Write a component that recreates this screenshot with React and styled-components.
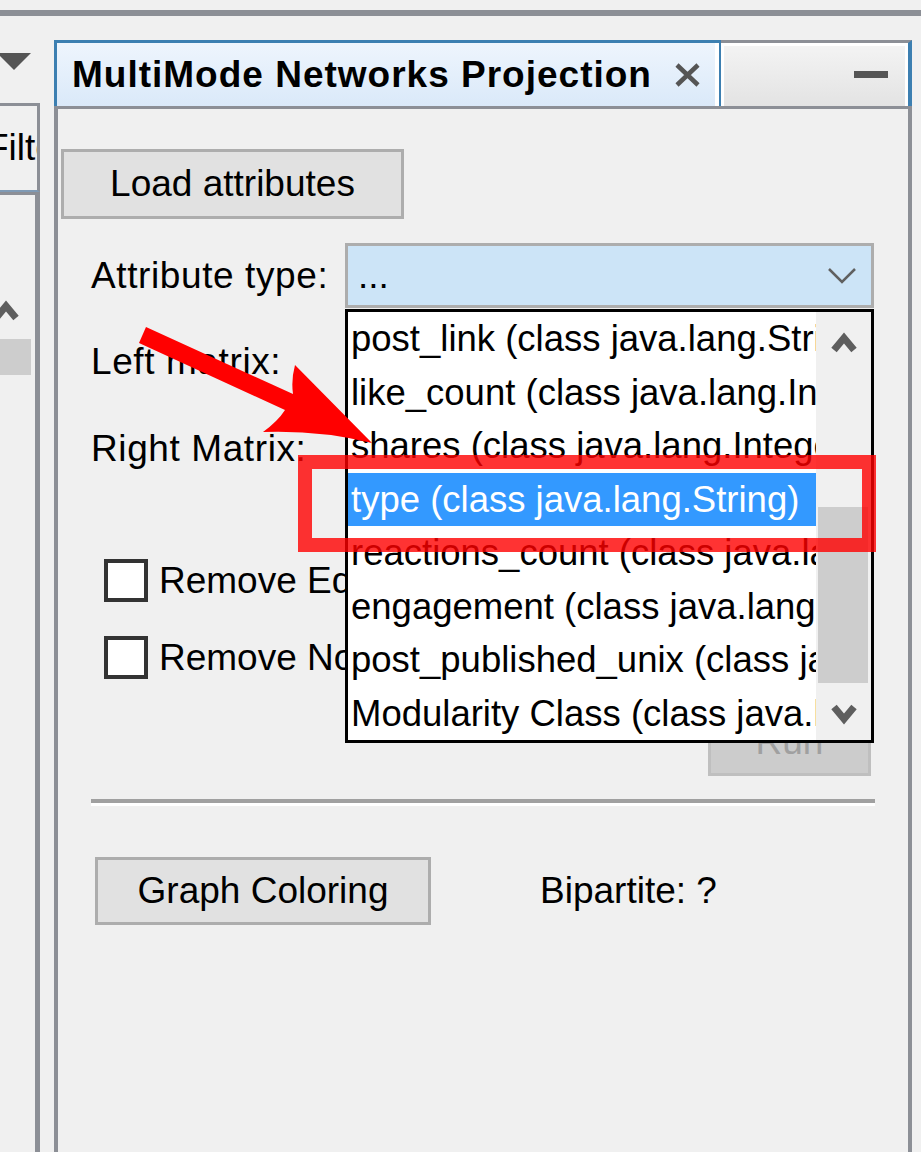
import React from "react"
import styled, { createGlobalStyle } from "styled-components"

const LINE = "#8c8f96"
const BLUE = "#3c7fb1"

const GlobalStyle = createGlobalStyle`
*{
  margin:0;
  padding:0;
  box-sizing:border-box;
}
html, body{
  background:#f0f0f0;
}
body{
  font-family:"Liberation Sans", Arial, sans-serif;
  overflow:hidden;
}
`

const Page = styled.div`
position:relative;
width:921px;
height:1152px;
overflow:hidden;
display:flex;
flex-direction:column;
font-size:37px;
color:#000;
`

const TopRule = styled.div`
margin-top:10px;
height:6px;
flex-shrink:0;
background:${LINE};
`

const Workspace = styled.div`
display:flex;
flex:1;
min-height:0;
`

/* left dock, mostly cut off */
const LeftDock = styled.div`
width:40px;
display:flex;
flex-direction:column;
overflow:hidden;
`

const DockHeader = styled.div`
height:87px;
padding-top:37px;
`

const DockArrow = styled.div`
width:0;
height:0;
margin-left:-3px;
border-left:17px solid transparent;
border-right:17px solid transparent;
border-top:17px solid #555;
`

const FilterTab = styled.div`
height:89px;
display:flex;
align-items:center;
overflow:hidden;
white-space:nowrap;
border-top:3px solid ${LINE};
border-right:3px solid ${LINE};
border-bottom:2px solid #7f9ab5;
`

const FilterLabel = styled.span`
margin-left:-14px;
`

const LowerPane = styled.div`
flex:1;
display:flex;
flex-direction:column;
overflow:hidden;
padding-top:105px;
border-top:3px solid ${LINE};
border-right:5px solid ${LINE};
`

const PaneChevron = styled.svg`
margin-left:-7px;
flex-shrink:0;
`

const PaneThumb = styled.div`
margin-top:17px;
width:31px;
height:36px;
background:#cdcdcd;
`

/* main dock */
const MainDock = styled.div`
width:858px;
margin-left:14px;
margin-top:24px;
display:flex;
flex-direction:column;
`

const TabStrip = styled.div`
display:flex;
height:69px;
flex-shrink:0;
border-bottom:3px solid ${LINE};
`

const ActiveTab = styled.div`
width:667px;
display:flex;
align-items:center;
justify-content:space-between;
padding:0 18px 0 15px;
border-top:3px solid ${BLUE};
border-left:3px solid ${BLUE};
border-right:2px solid ${BLUE};
box-shadow:inset -4px 0 0 #fff;
background:linear-gradient(#eef5fd, #dae9f9);
`

const TabTitle = styled.span`
font-weight:bold;
letter-spacing:1px;
white-space:nowrap;
`

const TabCorner = styled.div`
flex:1;
display:flex;
align-items:center;
justify-content:flex-end;
padding-right:20px;
border-top:3px solid ${LINE};
border-right:4px solid ${BLUE};
box-shadow:inset 3px 3px 0 #fff, inset -3px 0 0 #fff;
background:linear-gradient(#f4f4f4, #e3e3e3);
`

const MinimizeDash = styled.div`
width:34px;
height:7px;
background:#555;
`

const Body = styled.div`
flex:1;
display:flex;
flex-direction:column;
align-items:flex-start;
border-left:4px solid ${LINE};
border-right:4px solid ${LINE};
`

const Button = styled.button`
font:inherit;
font-size:37px;
color:${p => (p.disabled ? "#a0a0a0" : "#000")};
background:${p => (p.disabled ? "#cccccc" : "#e1e1e1")};
border:3px solid ${p => (p.disabled ? "#bfbfbf" : "#adadad")};
display:flex;
align-items:center;
justify-content:center;
white-space:nowrap;
`

const LoadButton = styled(Button)`
margin:40px 0 0 3px;
width:343px;
height:70px;
`

const Form = styled.div`
display:grid;
grid-template-columns:254px 529px;
grid-auto-rows:65px;
row-gap:21.5px;
align-items:center;
margin:24px 0 0 33px;
`

const Label = styled.span`
white-space:nowrap;
letter-spacing:${p => (p.$wide ? "0.6px" : "0")};
`

const ComboWrap = styled.div`
position:relative;
height:65px;
`

const Combo = styled.div`
height:100%;
display:flex;
align-items:center;
justify-content:space-between;
padding:0 15px 0 10px;
border:3px solid #adadad;
background:${p => (p.$focused ? "#cce4f7" : "#e1e1e1")};
`

const Popup = styled.div`
position:absolute;
top:calc(100% + 1px);
left:0;
width:529px;
height:434px;
display:flex;
background:#fff;
border:3px solid #000;
z-index:5;
`

const PopupList = styled.ul`
list-style:none;
width:468px;
display:flex;
flex-direction:column;
overflow:hidden;
`

const PopupItem = styled.li`
height:53.5px;
line-height:53.5px;
padding-left:3px;
white-space:nowrap;
overflow:hidden;
font-size:36.5px;
color:${p => (p.$selected ? "#fff" : "#000")};
background:${p => (p.$selected ? "#3399ff" : "transparent")};
`

const ScrollBar = styled.div`
width:55px;
display:flex;
flex-direction:column;
background:#f0f0f0;
`

const ScrollCell = styled.div`
height:${p => p.$h}px;
display:flex;
align-items:center;
justify-content:center;
`

const ScrollTrack = styled.div`
flex:1;
padding-top:133px;
padding-left:2px;
`

const ScrollThumb = styled.div`
width:50px;
height:176px;
background:#cdcdcd;
`

const CheckList = styled.div`
display:flex;
flex-direction:column;
gap:27px;
margin:74.5px 0 0 46px;
`

const CheckRow = styled.label`
height:50px;
display:flex;
align-items:center;
gap:11px;
white-space:nowrap;
`

const CheckBox = styled.span`
width:44px;
height:43px;
border:4px solid #333;
background:#fff;
`

const RunButton = styled(Button)`
align-self:flex-end;
margin:25.5px 37px 0 0;
width:163px;
height:68px;
`

const Separator = styled.div`
align-self:stretch;
margin:23px 33px 0 33px;
height:7px;
border-top:4px solid #a0a0a0;
background:#fff;
`

const BottomRow = styled.div`
display:flex;
align-items:center;
gap:109px;
margin:51px 0 0 37px;
`

const GraphButton = styled(Button)`
width:336px;
height:68px;
`

/* annotations drawn on top of the screenshot */
const Highlight = styled.div`
position:absolute;
left:298px;
top:455px;
width:578px;
height:97px;
border:14px solid rgba(255, 0, 0, 0.8);
z-index:10;
pointer-events:none;
`

const Arrow = styled.svg`
position:absolute;
left:130px;
top:320px;
z-index:11;
pointer-events:none;
`

const Caret = ({ down }) => (
  <svg width="26" height="22" viewBox="0 0 26 22">
    <polyline
      points={down ? "3,4 13,16 23,4" : "3,18 13,6 23,18"}
      fill="none"
      stroke="#5e5e5e"
      strokeWidth="7"
    />
  </svg>
)

const items = [
  "post_link (class java.lang.String)",
  "like_count (class java.lang.Integer)",
  "shares (class java.lang.Integer)",
  "type (class java.lang.String)",
  "reactions_count (class java.lang.Integer)",
  "engagement (class java.lang.Integer)",
  "post_published_unix (class java.lang.Long)",
  "Modularity Class (class java.lang.Integer)",
]

class App extends React.Component {
  state = {
    selected: 3,
  }

  render() {
    return (
      <Page>
        <GlobalStyle />
        <TopRule />
        <Workspace>
          <LeftDock>
            <DockHeader>
              <DockArrow />
            </DockHeader>
            <FilterTab>
              <FilterLabel>Filters</FilterLabel>
            </FilterTab>
            <LowerPane>
              <PaneChevron width="26" height="22" viewBox="0 0 26 22">
                <polyline points="3,18 13,6 23,18" fill="none" stroke="#5e5e5e" strokeWidth="7" />
              </PaneChevron>
              <PaneThumb />
            </LowerPane>
          </LeftDock>

          <MainDock>
            <TabStrip>
              <ActiveTab>
                <TabTitle>MultiMode Networks Projection</TabTitle>
                <svg width="27" height="24" viewBox="0 0 27 24">
                  <path d="M3 2 L24 22 M24 2 L3 22" stroke="#555" strokeWidth="4.5" />
                </svg>
              </ActiveTab>
              <TabCorner>
                <MinimizeDash />
              </TabCorner>
            </TabStrip>

            <Body>
              <LoadButton>Load attributes</LoadButton>

              <Form>
                <Label $wide>Attribute type:</Label>
                <ComboWrap>
                  <Combo $focused>
                    <span>...</span>
                    <svg width="28" height="17" viewBox="0 0 28 17">
                      <polyline points="1,2 14,15 27,2" fill="none" stroke="#606060" strokeWidth="2.5" />
                    </svg>
                  </Combo>
                  <Popup>
                    <PopupList>
                      {items.map((it, i) => (
                        <PopupItem key={it} $selected={i === this.state.selected}>
                          {it}
                        </PopupItem>
                      ))}
                    </PopupList>
                    <ScrollBar>
                      <ScrollCell $h={62}>
                        <Caret />
                      </ScrollCell>
                      <ScrollTrack>
                        <ScrollThumb />
                      </ScrollTrack>
                      <ScrollCell $h={52}>
                        <Caret down />
                      </ScrollCell>
                    </ScrollBar>
                  </Popup>
                </ComboWrap>

                <Label $wide>Left matrix:</Label>
                <ComboWrap>
                  <Combo />
                </ComboWrap>

                <Label $wide>Right Matrix:</Label>
                <ComboWrap>
                  <Combo />
                </ComboWrap>
              </Form>

              <CheckList>
                <CheckRow>
                  <CheckBox />
                  Remove Edges
                </CheckRow>
                <CheckRow>
                  <CheckBox />
                  Remove Nodes
                </CheckRow>
              </CheckList>

              <RunButton disabled>Run</RunButton>

              <Separator />

              <BottomRow>
                <GraphButton>Graph Coloring</GraphButton>
                <Label>Bipartite: ?</Label>
              </BottomRow>
            </Body>
          </MainDock>
        </Workspace>

        <Highlight />
        <Arrow width="250" height="130" viewBox="130 320 250 130">
          <path
            d="M146 327 L293 394 Q291 380 295 365 L372 443 Q320 430 263 432 Q278 421 285 410 L139 343 Z"
            fill="#ff0000"
          />
        </Arrow>
      </Page>
    )
  }
}

export default App
